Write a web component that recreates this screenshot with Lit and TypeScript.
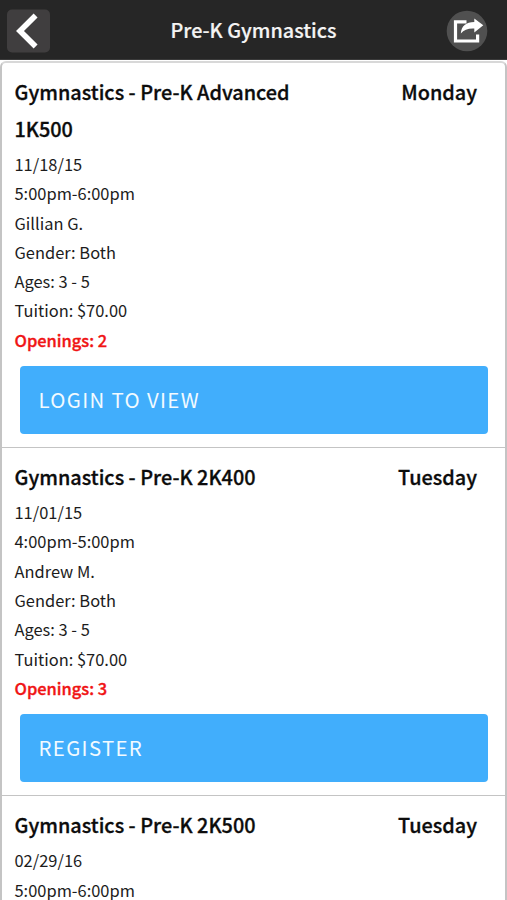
import { LitElement, html, css } from "lit";
import { customElement, property } from "lit/decorators.js";

interface ClassItem {
  title: string;
  day: string;
  lines: string[];
  openings: number;
  action: string;
}

const CLASSES: ClassItem[] = [
  {
    title: "Gymnastics - Pre-K Advanced 1K500",
    day: "Monday",
    lines: ["11/18/15", "5:00pm-6:00pm", "Gillian G.", "Gender: Both", "Ages: 3 - 5", "Tuition: $70.00"],
    openings: 2,
    action: "Login to view",
  },
  {
    title: "Gymnastics - Pre-K 2K400",
    day: "Tuesday",
    lines: ["11/01/15", "4:00pm-5:00pm", "Andrew M.", "Gender: Both", "Ages: 3 - 5", "Tuition: $70.00"],
    openings: 3,
    action: "Register",
  },
  {
    title: "Gymnastics - Pre-K 2K500",
    day: "Tuesday",
    lines: ["02/29/16", "5:00pm-6:00pm"],
    openings: 0,
    action: "",
  },
];

@customElement("class-card")
export class ClassCard extends LitElement {
  @property({ attribute: false }) item!: ClassItem;

  static styles = css`
    :host {
      display: block;
      padding: 11px 18px 12.6px 12.5px;
      border-bottom: 1px solid #c4c4c4;
    }
    .head {
      display: flex;
      justify-content: space-between;
      align-items: flex-start;
      font-size: 19.85px;
      font-weight: 500;
      line-height: 36.5px;
      padding-right: 10px;
      color: #0c0c0c;
      -webkit-text-stroke: 0.3px currentColor;
    }
    .title {
      width: 300px;
    }
    .lines {
      padding-top: 3px;
      font-size: 16.45px;
      line-height: 29.3px;
      color: #1c1c1c;
    }
    .openings {
      color: #f01414;
      font-weight: 500;
      -webkit-text-stroke: 0.35px currentColor;
    }
    .action {
      display: block;
      box-sizing: border-box;
      width: 468px;
      height: 68px;
      margin: 11px 0 0 5.5px;
      padding: 0 18.5px 2px;
      border: 0;
      border-radius: 4px;
      background: #41aefc;
      color: #f2faff;
      font: inherit;
      font-size: 20.4px;
      letter-spacing: 1.35px;
      text-align: left;
      text-transform: uppercase;
    }
  `;

  render() {
    const { title, day, lines, openings, action } = this.item;
    return html`
      <div class="head"><div class="title">${title}</div><div>${day}</div></div>
      <div class="lines">
        ${lines.map((l) => html`<div>${l}</div>`)}
        ${openings ? html`<div class="openings">Openings: ${openings}</div>` : null}
      </div>
      ${action ? html`<button class="action">${action}</button>` : null}
    `;
  }
}

@customElement("app-root")
export class AppRoot extends LitElement {
  static styles = css`
    :host {
      display: flex;
      flex-direction: column;
      height: 900px;
      overflow: hidden;
      background: #fff;
      font-family: "Noto Sans CJK SC", "Noto Sans", sans-serif;
    }
    .bar {
      flex: none;
      display: grid;
      grid-template-columns: 44px 1fr 44px;
      align-items: center;
      box-sizing: border-box;
      height: 60px;
      padding: 2px 7px 0 7px;
      background: #262626;
      border-bottom: 1px solid #3a3a3a;
    }
    .bar svg {
      display: block;
    }
    .share {
      justify-self: end;
      margin-right: 12px;
    }
    .name {
      text-align: center;
      color: #f4f4f4;
      font-size: 19.8px;
      font-weight: 500;
      line-height: 30px;
      padding-bottom: 1px;
      -webkit-text-stroke: 0.2px currentColor;
    }
    .list {
      flex: none;
      box-sizing: border-box;
      border: 2px solid #c4c4c4;
      border-top-color: #d8d8d8;
      border-bottom: 0;
      border-radius: 6px 6px 0 0;
      margin-top: 1px;
      height: 839px;
      overflow: hidden;
    }
  `;

  render() {
    return html`
      <header class="bar">
        <svg width="44" height="44" viewBox="0 0 44 44">
          <rect x="0" y="0.5" width="43" height="43" rx="5" fill="#403e3f" />
          <path d="M28.6 6.5 L13 22 L28.6 37.5" fill="none" stroke="#fff" stroke-width="5.6" />
        </svg>
        <div class="name">Pre-K Gymnastics</div>
        <svg class="share" width="42" height="42" viewBox="0 0 42 42">
          <circle cx="21" cy="21" r="20.3" fill="#505050" />
          <path d="M20.5 11.9 H9.5 V31 H31.6 V24.5" fill="none" stroke="#fff" stroke-width="3.2" />
          <path d="M14.8 23.6 C15.4 16 20 12.1 28.3 12 V8.4 L37.3 15.3 L28.3 22.6 V18.6 C22.3 18.3 18 19.6 14.8 23.6Z" fill="#fff" />
        </svg>
      </header>
      <main class="list">${CLASSES.map((c) => html`<class-card .item=${c}></class-card>`)}</main>
    `;
  }
}
